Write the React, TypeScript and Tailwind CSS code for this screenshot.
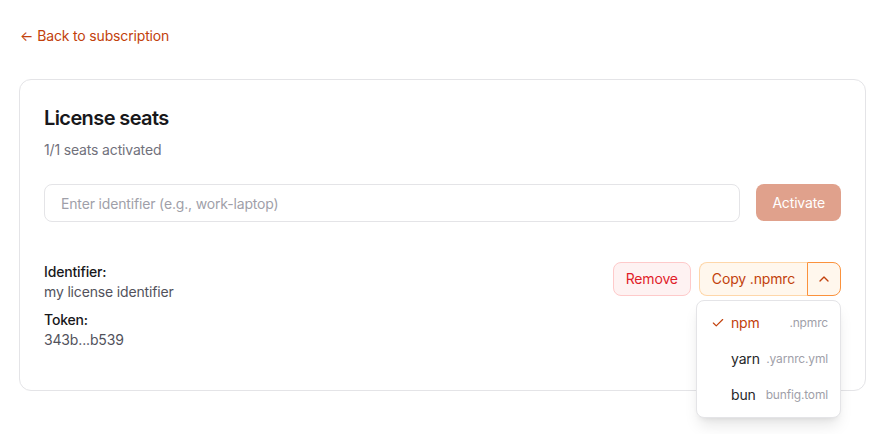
import { Check, ChevronUp } from "lucide-react";

const managers = [
  { name: "npm", file: ".npmrc" },
  { name: "yarn", file: ".yarnrc.yml" },
  { name: "bun", file: "bunfig.toml" },
];

export default function App() {
  const selected = "npm";

  return (
    <main className="min-h-screen bg-white pl-[19px] pt-[26px] font-['Inter',sans-serif] tracking-[-0.01em] text-zinc-900">
      <a href="#" className="ml-px flex items-center gap-1 text-sm leading-5 text-[#c2410c]">
        <span>←</span>
        <span>Back to subscription</span>
      </a>

      <section className="mt-[33px] w-[847px] rounded-xl border border-zinc-200 bg-white px-6 pt-6 pb-6">
        <h2 className="text-xl leading-7 font-semibold tracking-[-0.03em] text-zinc-900">License seats</h2>
        <p className="mt-2 text-sm leading-5 text-zinc-500">1/1 seats activated</p>

        <div className="mt-6 flex gap-4">
          <input
            placeholder="Enter identifier (e.g., work-laptop)"
            className="h-[38px] flex-1 rounded-lg border border-zinc-200 px-4 text-sm text-zinc-900 placeholder-zinc-400 outline-none"
          />
          <button className="h-[37px] rounded-lg bg-[#e0a18c] px-4 text-sm text-white">
            Activate
          </button>
        </div>

        <div className="mt-6 flex items-start justify-between py-4">
          <div className="text-sm leading-5">
            <div className="font-medium text-zinc-900">Identifier:</div>
            <div className="text-zinc-600">my license identifier</div>
            <div className="mt-2 font-medium text-zinc-900">Token:</div>
            <div className="text-zinc-600">343b...b539</div>
          </div>

          <div className="flex items-center gap-2">
            <button className="rounded-lg border border-[#fecaca] bg-[#fef2f2] px-3 py-1.5 text-sm leading-5 text-[#e11d2a]">
              Remove
            </button>
            <div className="relative flex">
              <button className="rounded-l-lg border border-r-0 border-[#fed7aa] bg-[#fff7ed] px-3 py-1.5 text-sm leading-5 text-[#c2410c]">
                Copy .npmrc
              </button>
              <button className="flex items-center rounded-r-lg border border-[#fb923c] bg-[#fff7ed] px-2 text-[#c2410c]">
                <ChevronUp size={16} strokeWidth={2} />
              </button>

              <div className="absolute top-full right-0 mt-1 w-[145px] rounded-lg border border-zinc-200 bg-white p-1 shadow-lg">
                {managers.map((m) => (
                  <div key={m.name} className="flex items-center justify-between py-2 pr-2 pl-2.5">
                    <div className="flex items-center">
                      <span className="flex w-5 items-center">
                        {m.name === selected && <Check size={14} strokeWidth={2} className="text-[#c2410c]" />}
                      </span>
                      <span
                        className={
                          m.name === selected
                            ? "text-sm leading-5 text-[#c2410c]"
                            : "text-sm leading-5 text-zinc-800"
                        }
                      >
                        {m.name}
                      </span>
                    </div>
                    <span className="text-xs text-zinc-400">{m.file}</span>
                  </div>
                ))}
              </div>
            </div>
          </div>
        </div>
      </section>
    </main>
  );
}
